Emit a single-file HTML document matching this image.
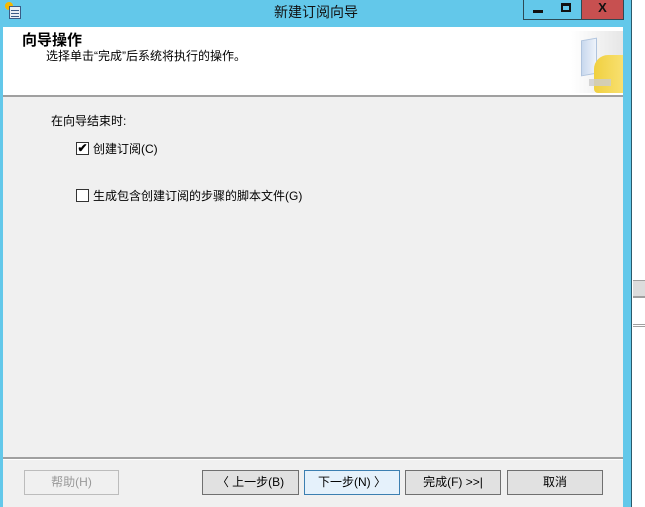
<!DOCTYPE html>
<html><head><meta charset="utf-8"><style>
*{margin:0;padding:0;box-sizing:border-box}
body{width:645px;height:507px;background:#fff;position:relative;overflow:hidden;font-family:"Liberation Sans","Noto Sans CJK SC","WenQuanYi Zen Hei",sans-serif;font-size:12px;color:#000}
.a{position:absolute}
.win{left:0;top:0;width:632px;height:507px;background:#63c8ea;border-right:1px solid #2a5a6a}
.title{left:0;top:0;width:632px;height:26px;text-align:center;line-height:24px;font-size:14px;color:#111}
.cb{height:20px;top:0;border:1px solid #2d4a55;border-top:none;background:#63c8ea}
.client{left:3px;top:27px;width:620px;height:480px;background:#f0f0f0}
.hdr{left:0;top:0;width:620px;height:68px;background:#fff}
.btn{height:25px;top:443px;border:1px solid #707070;background:#e1e1e1;text-align:center;line-height:23px;font-size:12px}
.chk{width:13px;height:13px;border:1px solid #333;background:#fff}
</style></head><body>
<div class="a win"></div>
<div class="a" style="left:633px;top:280px;width:12px;height:18px;background:#dcdcdc;border-top:1px solid #a0a0a0;border-bottom:2px solid #a0a0a0"></div>
<div class="a" style="left:633px;top:324px;width:12px;height:3px;border-top:1px solid #a0a0a0;border-bottom:1px solid #a0a0a0"></div>
<div class="a title">新建订阅向导</div>
<div class="a" style="left:5px;top:2px;width:8px;height:8px;border-radius:50%;background:#f5b800"></div>
<div class="a" style="left:9px;top:6px;width:12px;height:13px;background:#e8eef4;border:1px solid #3a5b86"></div>
<div class="a" style="left:11px;top:10px;width:8px;height:1px;background:#3a5b86;box-shadow:0 3px 0 #3a5b86,0 6px 0 #3a5b86"></div>
<div class="a cb" style="left:523px;width:30px"><div class="a" style="left:9px;top:10px;width:10px;height:3px;background:#111"></div></div>
<div class="a cb" style="left:552px;width:30px;border-left:none"><div class="a" style="left:9px;top:3px;width:10px;height:9px;border:2px solid #111;border-top-width:3px"></div></div>
<div class="a cb" style="left:582px;width:42px;background:#c75050;border-left:none;color:#111;font-weight:bold;text-align:center;line-height:16px;font-size:13px">X</div>
<div class="a client">
 <div class="a hdr">
  <div class="a" style="left:19px;top:5px;font-size:15px;line-height:17px;font-weight:bold">向导操作</div>
  <div class="a" style="left:43px;top:22px;line-height:14px">选择单击“完成”后系统将执行的操作。</div>
  <div class="a" style="left:568px;top:4px;width:52px;height:62px;background:linear-gradient(90deg,#fff,#e6e6e6)"></div>
  <div class="a" style="left:578px;top:12px;width:16px;height:36px;background:linear-gradient(90deg,#c8d8ee,#eef3fa);border:1px solid #b0c4de;transform:skewY(-10deg)"></div>
  <div class="a" style="left:591px;top:28px;width:29px;height:38px;background:linear-gradient(90deg,#f0d040,#f8e070);border-radius:14px 0 0 4px"></div>
  <div class="a" style="left:586px;top:52px;width:22px;height:7px;background:#ccc;opacity:.8"></div>
 </div>
 <div class="a" style="left:0;top:68px;width:620px;height:2px;background:#a0a0a0"></div>
 <div class="a" style="left:48px;top:85px">在向导结束时:</div>
 <div class="a chk" style="left:73px;top:115px;font-size:12px;line-height:10px;text-align:center;font-weight:bold">✔</div>
 <div class="a" style="left:90px;top:113px">创建订阅(C)</div>
 <div class="a chk" style="left:73px;top:162px"></div>
 <div class="a" style="left:90px;top:160px">生成包含创建订阅的步骤的脚本文件(G)</div>
 <div class="a" style="left:0;top:430px;width:620px;height:2px;background:#a0a0a0"></div>
 <div class="a" style="left:0;top:432px;width:620px;height:1px;background:#fff"></div>
 <div class="a btn" style="left:21px;width:95px;border-color:#bcbcbc;background:#f0f0f0;color:#999">帮助(H)</div>
 <div class="a btn" style="left:199px;width:97px">〈 上一步(B)</div>
 <div class="a btn" style="left:301px;width:96px;border-color:#3c7fb1;background:#e5f1fb">下一步(N) 〉</div>
 <div class="a btn" style="left:402px;width:96px">完成(F) &gt;&gt;|</div>
 <div class="a btn" style="left:504px;width:96px">取消</div>
</div>
</body></html>
